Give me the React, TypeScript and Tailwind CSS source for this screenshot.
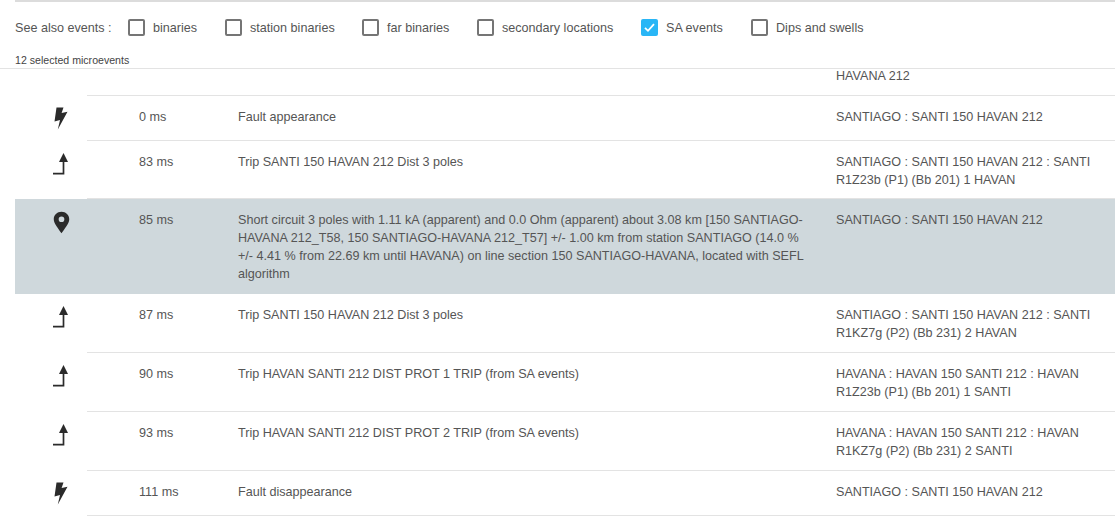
import React from "react"

const filters = [
  { label: "binaries", width: "w-[97px]" },
  { label: "station binaries", width: "w-[137px]" },
  { label: "far binaries", width: "w-[115px]" },
  { label: "secondary locations", width: "w-[164px]" },
  { label: "SA events", width: "w-[110px]", checked: true },
  { label: "Dips and swells", width: "" },
]

type Kind = "bolt" | "trip" | "pin"

interface EventRow {
  kind: Kind
  time: string
  text: string[]
  location: string[]
  height: string
  selected?: boolean
}

const rows: EventRow[] = [
  { kind: "bolt", time: "0 ms", text: ["Fault appearance"], location: ["SANTIAGO : SANTI 150 HAVAN 212"], height: "h-[45px]" },
  {
    kind: "trip",
    time: "83 ms",
    text: ["Trip SANTI 150 HAVAN 212 Dist 3 poles"],
    location: ["SANTIAGO : SANTI 150 HAVAN 212 : SANTI", "R1Z23b (P1) (Bb 201) 1 HAVAN"],
    height: "h-[58px]",
  },
  {
    kind: "pin",
    time: "85 ms",
    text: [
      "Short circuit 3 poles with 1.11 kA (apparent) and 0.0 Ohm (apparent) about 3.08 km [150 SANTIAGO-",
      "HAVANA 212_T58, 150 SANTIAGO-HAVANA 212_T57] +/- 1.00 km from station SANTIAGO (14.0 %",
      "+/- 4.41 % from 22.69 km until HAVANA) on line section 150 SANTIAGO-HAVANA, located with SEFL",
      "algorithm",
    ],
    location: ["SANTIAGO : SANTI 150 HAVAN 212"],
    height: "h-[95px]",
    selected: true,
  },
  {
    kind: "trip",
    time: "87 ms",
    text: ["Trip SANTI 150 HAVAN 212 Dist 3 poles"],
    location: ["SANTIAGO : SANTI 150 HAVAN 212 : SANTI", "R1KZ7g (P2) (Bb 231) 2 HAVAN"],
    height: "h-[59px]",
  },
  {
    kind: "trip",
    time: "90 ms",
    text: ["Trip HAVAN SANTI 212 DIST PROT 1 TRIP (from SA events)"],
    location: ["HAVANA : HAVAN 150 SANTI 212 : HAVAN", "R1Z23b (P1) (Bb 201) 1 SANTI"],
    height: "h-[59px]",
  },
  {
    kind: "trip",
    time: "93 ms",
    text: ["Trip HAVAN SANTI 212 DIST PROT 2 TRIP (from SA events)"],
    location: ["HAVANA : HAVAN 150 SANTI 212 : HAVAN", "R1KZ7g (P2) (Bb 231) 2 SANTI"],
    height: "h-[59px]",
  },
  { kind: "bolt", time: "111 ms", text: ["Fault disappearance"], location: ["SANTIAGO : SANTI 150 HAVAN 212"], height: "h-[45px]" },
]

function RowIcon({ kind }: { kind: Kind }) {
  if (kind === "bolt") {
    return (
      <svg width="14" height="23" viewBox="0 0 14 23" className="text-[#2b2b2b] ml-[-1px]">
        <path d="M2.5 0.5 L9.5 0.5 L7.6 6 L13.5 4.8 L3.8 22.5 L6 13 L0.5 14.5 Z" fill="currentColor" />
      </svg>
    )
  }
  if (kind === "pin") {
    return (
      <svg width="17" height="23" viewBox="0 0 18 24" className="text-[#2b2b2b] mt-[1px]">
        <path
          fillRule="evenodd"
          d="M9 0.5 C13.6 0.5 17.2 4 17.2 8.5 C17.2 13.5 12 18.5 9 23.5 C6 18.5 0.8 13.5 0.8 8.5 C0.8 4 4.4 0.5 9 0.5 Z M9 5.6 A3 3 0 1 0 9 11.6 A3 3 0 1 0 9 5.6 Z"
          fill="currentColor"
        />
      </svg>
    )
  }
  return (
    <svg width="15" height="22" viewBox="0 0 15 22" className="text-[#2b2b2b] ml-[-1px] mt-[1px]">
      <path d="M10.5 0 L15 9 L6 9 Z" fill="currentColor" />
      <path d="M10.5 8 L10.5 20.6 L0 20.6" fill="none" stroke="currentColor" strokeWidth="1.7" />
    </svg>
  )
}

export default function App() {
  return (
    <div
      className="w-[1115px] h-[523px] overflow-hidden bg-white text-[#555] text-[12.6px] leading-[18px]"
      style={{ fontFamily: '"Liberation Sans", Arial, sans-serif' }}
    >
      <div className="border-t-2 border-[#dcdcdc] ml-[15px]" />

      {/* Filters */}
      <div className="flex items-center pl-[15px] pt-[16px] h-[35px]">
        <span className="w-[113px] shrink-0">See also events :</span>
        {filters.map(f => (
          <label key={f.label} className={`flex items-center shrink-0 ${f.width}`}>
            {f.checked ? (
              <span className="w-[17px] h-[17px] rounded-[2px] bg-[#29b6f6] flex items-center justify-center">
                <svg width="13" height="13" viewBox="0 0 13 13">
                  <path d="M2 6.8 L5 9.8 L11 3.2" fill="none" stroke="#fff" strokeWidth="1.8" />
                </svg>
              </span>
            ) : (
              <span className="w-[17px] h-[17px] rounded-[2px] border-2 border-[#757575]" />
            )}
            <span className="ml-[8px]">{f.label}</span>
          </label>
        ))}
      </div>

      <div className="pl-[15px] pt-[16px] text-[10.6px] leading-[14px] text-[#444] h-[32px] border-b border-[#e3e3e3]">
        12 selected microevents
      </div>

      {/* Events table */}
      <div className="h-[29px] ml-[87px] border-b border-[#e3e3e3] pl-[749px]">
        <div className="-mt-[2px]">HAVANA 212</div>
      </div>
      {rows.map((row, i) => (
        <div key={i} className={`flex ml-[15px] ${row.height} ${row.selected ? "bg-[#cfd8dc]" : ""}`}>
          <div className="w-[72px] shrink-0 flex justify-center pt-[11px] pl-[20px]">
            <RowIcon kind={row.kind} />
          </div>
          <div className={`flex flex-1 pt-[12px] ${row.selected ? "" : "border-b border-[#e3e3e3]"}`}>
            <div className="w-[151px] pl-[52px] shrink-0">{row.time}</div>
            <div className="w-[598px] shrink-0">
              {row.text.map(line => (
                <div key={line} className="whitespace-nowrap">
                  {line}
                </div>
              ))}
            </div>
            <div>
              {row.location.map(line => (
                <div key={line} className="whitespace-nowrap">
                  {line}
                </div>
              ))}
            </div>
          </div>
        </div>
      ))}
    </div>
  )
}
